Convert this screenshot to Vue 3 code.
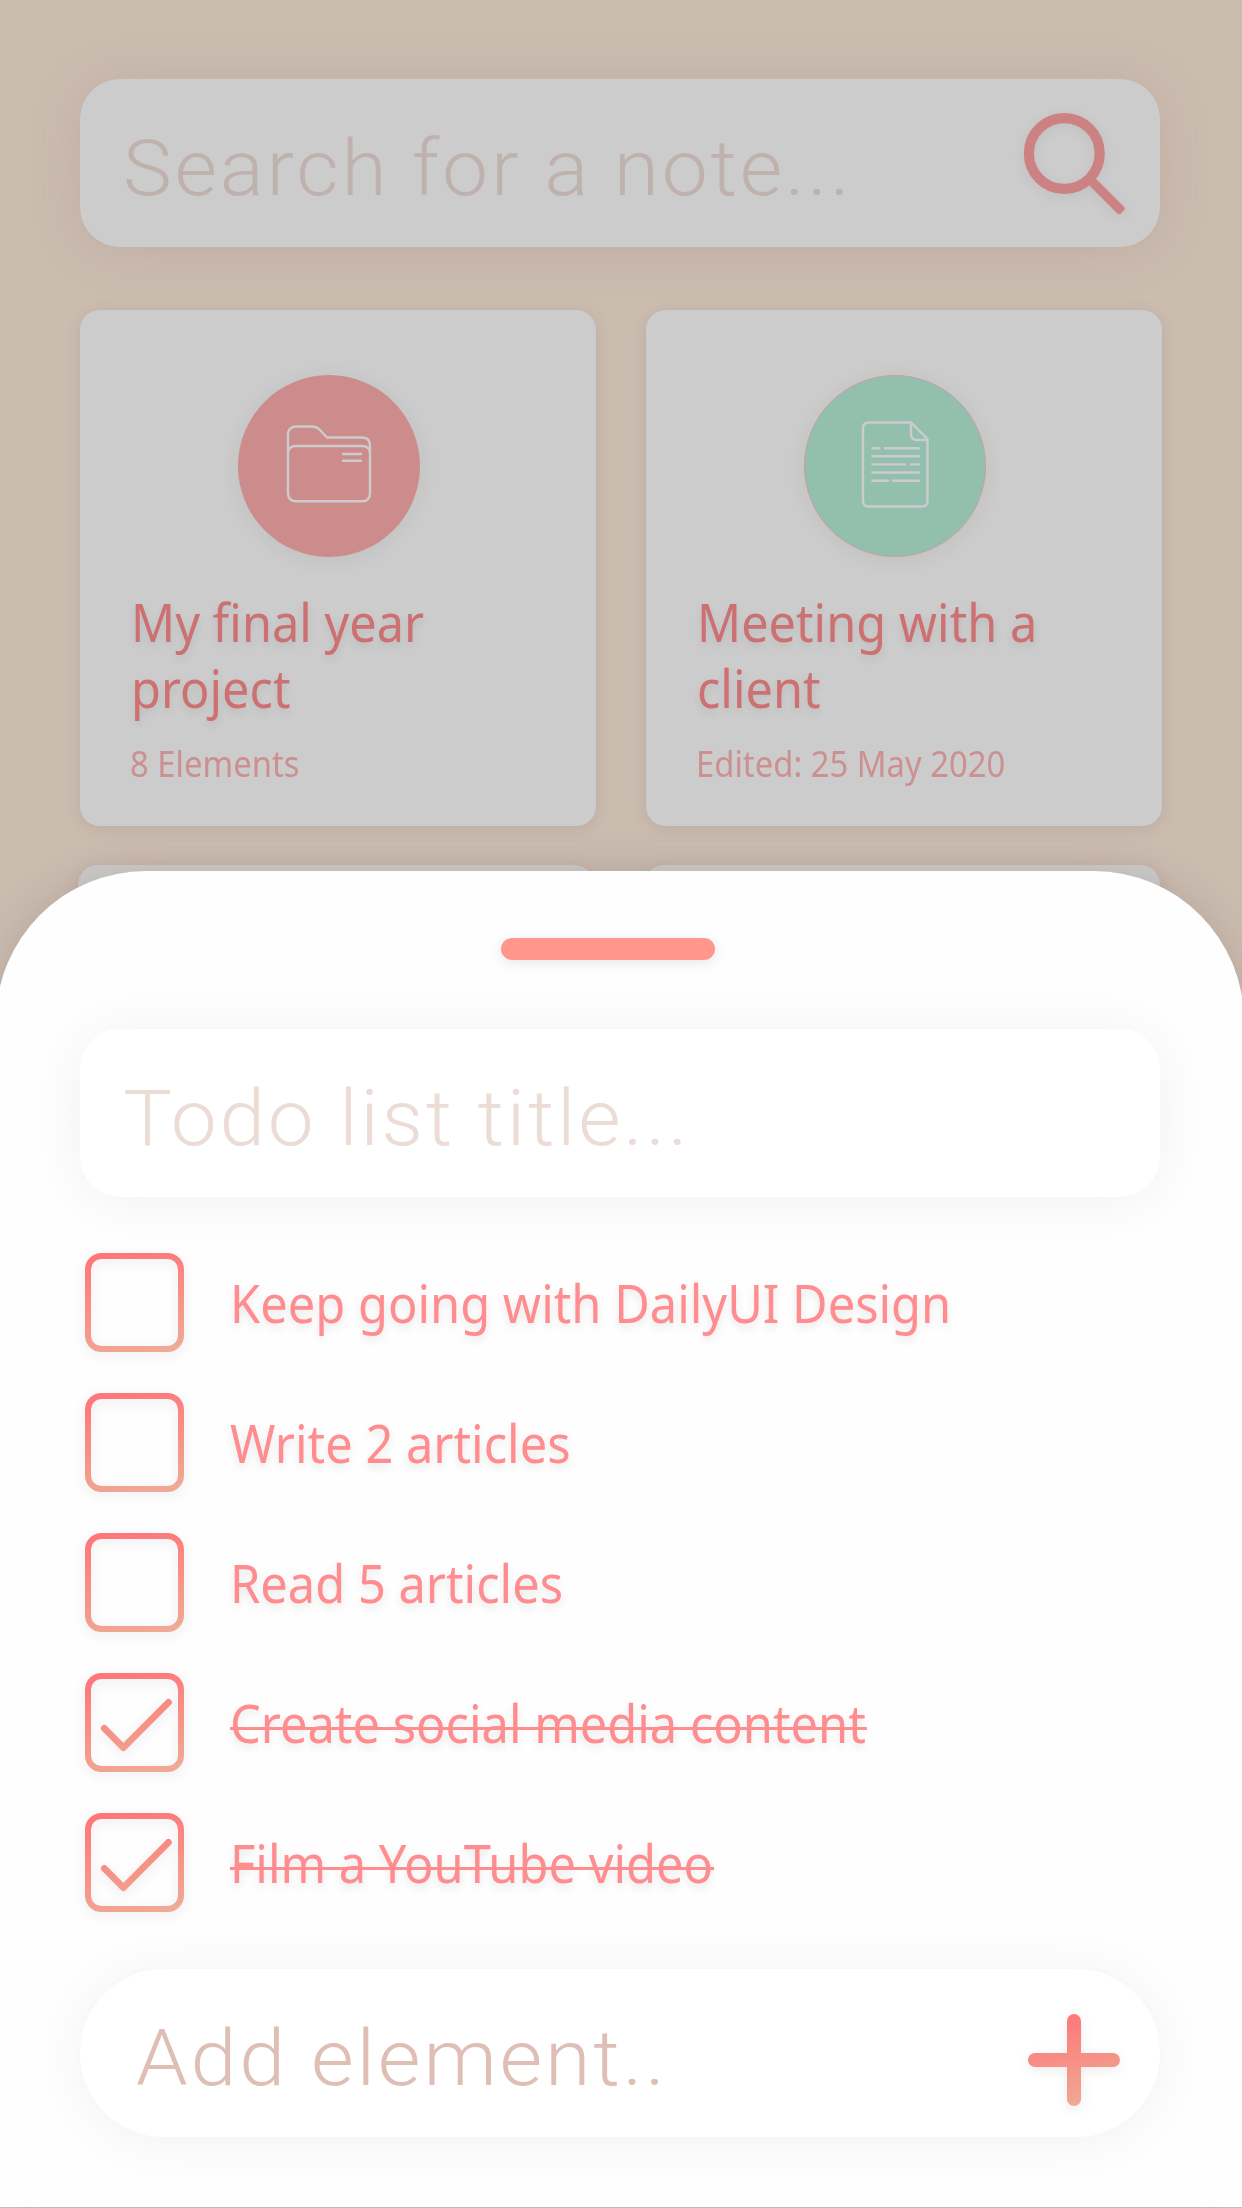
<script setup>
const notes = [
  { icon: 'folder', title: ['My final year', 'project'], meta: '8 Elements' },
  { icon: 'page', title: ['Meeting with a', 'client'], meta: 'Edited: 25 May 2020' },
]

const todos = [
  { label: 'Keep going with DailyUI Design', done: false },
  { label: 'Write 2 articles', done: false },
  { label: 'Read 5 articles', done: false },
  { label: 'Create social media content', done: true },
  { label: 'Film a YouTube video', done: true },
]
</script>

<template>
  <div class="screen">
    <main class="notes">
      <div class="field search">
        <span class="placeholder search-text">Search for a note...</span>
        <svg class="search-icon" width="112" height="112" viewBox="0 0 112 112" fill="none">
          <circle cx="50.3" cy="50.5" r="35.4" stroke="#cc8183" stroke-width="10.2" />
          <rect y="-4.700" width="46.500" height="9.400" rx="2.500" fill="#cc8183" transform="translate(75.500 76) rotate(45)" />
        </svg>
      </div>

      <div class="grid">
        <article v-for="note in notes" :key="note.icon" class="card">
          <div class="badge" :class="note.icon">
            <svg v-if="note.icon === 'folder'" width="182" height="182" viewBox="0 0 182 182" fill="none" stroke="#cccccc" stroke-width="2.400" stroke-linecap="round" stroke-linejoin="round">
              <path d="M50 72V60Q50 51.500 58.500 51.500H74Q78.500 51.500 81.500 54.500L89 62.500H124Q132 62.500 132 71V77" />
              <path d="M50 72V118Q50 126.300 58.500 126.300H124Q132 126.300 132 118V77Q131 71 124 71H58.500Q51 71 50 77" />
              <path d="M105 79H123M105 85.800H123" />
            </svg>
            <svg v-else width="182" height="182" viewBox="0 0 182 182" fill="none" stroke="#cccccc" stroke-width="2.400" stroke-linecap="round" stroke-linejoin="round">
              <path d="M107 47.500H65Q59 47.500 59 53.500V126Q59 131.500 65 131.500H118Q123.500 131.500 123.500 126V64L107 47.500V59Q107 65 113 65H123.500" />
              <path d="M68.500 73.200H75.500M81 73.200H115M68.500 81.300H115M68.500 89.400H101.500M107 89.400H115M68.500 97.500H115M68.500 105.800H84M89 105.800H115" />
            </svg>
          </div>
          <h2 class="title"><span v-for="line in note.title" :key="line">{{ line }}</span></h2>
          <p class="meta"><span>{{ note.meta }}</span></p>
        </article>
      </div>

      <div class="grid next-row">
        <article class="card"></article>
        <article class="card"></article>
      </div>
    </main>

    <section class="sheet">
      <div class="handle"></div>
      <div class="field name">
        <span class="placeholder name-text">Todo list title...</span>
      </div>

      <ul class="todos">
        <li v-for="todo in todos" :key="todo.label" class="todo">
          <svg class="box" width="99" height="99" viewBox="0 0 99 99" fill="none" stroke="url(#coral)" stroke-width="6" stroke-linecap="round" stroke-linejoin="round">
            <defs>
              <linearGradient id="coral" gradientUnits="userSpaceOnUse" x1="40" y1="0" x2="62" y2="99">
                <stop offset="0" stop-color="#fe777a" />
                <stop offset="1" stop-color="#efa994" />
              </linearGradient>
            </defs>
            <rect x="3" y="3" width="93" height="93" rx="13.500" />
            <path v-if="todo.done" d="M19.300 55.300L38.400 74.600L83.500 29.300" stroke-width="6.700" />
          </svg>
          <span class="label" :class="{ done: todo.done }">{{ todo.label }}</span>
        </li>
      </ul>

      <div class="field add">
        <span class="placeholder add-text">Add element..</span>
        <svg class="plus" width="92" height="92" viewBox="0 0 92 92" fill="none" stroke="url(#plus)" stroke-width="14" stroke-linecap="round">
          <defs>
            <linearGradient id="plus" gradientUnits="userSpaceOnUse" x1="36" y1="0" x2="56" y2="92">
              <stop offset="0" stop-color="#fe777a" />
              <stop offset="1" stop-color="#efa994" />
            </linearGradient>
          </defs>
          <path d="M46 7V85M7 46H85" />
        </svg>
      </div>
    </section>
  </div>
</template>

<style>
body {
  margin: 0;
  background: #cbbcb0;
}
</style>

<style scoped>
.screen {
  width: 1242px;
  height: 2208px;
  overflow: hidden;
  position: relative;
  background: linear-gradient(#cbbcb0, #cbbcb0 2207px, #c6c9c6 2207px);
  font-family: "Noto Sans", "Open Sans", sans-serif;
}

.notes {
  padding: 79px 80px 0;
}

.field {
  box-sizing: border-box;
  width: 1080px;
  height: 168px;
  border-radius: 40px;
  display: flex;
  align-items: center;
  justify-content: space-between;
}

.placeholder {
  font-family: Roboto, sans-serif;
  font-weight: 300;
  font-size: 77px;
  line-height: 100px;
  letter-spacing: 2.6px;
  white-space: nowrap;
  padding-top: 11px;
  transform: scaleX(1.067);
  transform-origin: left;
}

.search {
  background: #cccccc;
  box-shadow: 0 3px 50px rgba(160, 118, 110, 0.22);
  padding: 0 31px 0 43px;
}

.search-text {
  color: #bfb1ae;
}

.search-icon {
  margin-top: -8px;
  margin-right: 3px;
  filter: drop-shadow(0 3px 6px rgba(0, 0, 0, 0.06));
}

.grid {
  width: 1082px;
  display: flex;
  justify-content: space-between;
  margin-top: 63px;
}

.card {
  box-sizing: border-box;
  width: 516px;
  height: 516px;
  border-radius: 20px;
  background: #cccccc;
  box-shadow: 0 3px 14px rgba(150, 110, 105, 0.22);
  padding: 65px 50px 0;
}

.next-row {
  margin-top: 39px;
  margin-left: -2px;
}

.badge {
  box-sizing: border-box;
  width: 182px;
  height: 182px;
  margin-left: 108px;
  border-radius: 50%;
  display: flex;
  align-items: center;
  justify-content: center;
  box-shadow: 0 3px 22px rgba(0, 0, 0, 0.06);
}

.badge svg {
  flex: none;
}

.folder {
  background: #cc8c8c;
}

.page {
  background: #93bfae;
  border: 1px solid #c6a09c;
}

.title {
  margin: 32px 0 0 1px;
  font-size: 52px;
  font-weight: 400;
  line-height: 66px;
  color: #cc7072;
  text-shadow: 0 4px 9px rgba(0, 0, 0, 0.09);
  white-space: nowrap;
  transform: scaleX(0.936);
  transform-origin: left;
}

.title span {
  display: block;
}

.meta {
  margin: 18px 0 0;
  font-size: 35.5px;
  line-height: 48px;
  color: #cc9090;
  white-space: nowrap;
  transform: scaleX(0.924);
  transform-origin: left;
}

.sheet {
  position: absolute;
  left: -4px;
  top: 871px;
  box-sizing: border-box;
  width: 1248px;
  height: 1336px;
  padding: 67px 84px 0;
  border-radius: 150px 150px 0 0;
  background: #fefefe;
  box-shadow: 0 0 40px rgba(110, 75, 70, 0.2);
}

.handle {
  width: 214px;
  height: 22px;
  margin-left: 421px;
  border-radius: 11px;
  background: #ff978d;
  box-shadow: 0 3px 14px rgba(0, 0, 0, 0.09);
}

.name,
.add {
  background: #ffffff;
  box-shadow: 0 3px 55px rgba(0, 0, 0, 0.055);
}

.name {
  margin-top: 69px;
  padding: 0 43px;
}

.name-text {
  color: #ebdcd6;
  transform: scaleX(1.064);
}

.todos {
  list-style: none;
  margin: 56px 0 0;
  padding: 0 0 0 5px;
  display: flex;
  flex-direction: column;
  gap: 41px;
}

.todo {
  height: 99px;
  display: flex;
  align-items: center;
  gap: 46px;
}

.box {
  overflow: visible;
  filter: drop-shadow(0 3px 6px rgba(0, 0, 0, 0.08));
}

.label {
  position: relative;
  font-size: 52px;
  line-height: 99px;
  color: #ff8c8f;
  white-space: nowrap;
  text-shadow: 0 4px 9px rgba(0, 0, 0, 0.1);
  transform: scaleX(0.938);
  transform-origin: left;
}

.done::after {
  content: "";
  position: absolute;
  left: 0;
  right: -1px;
  top: 54px;
  height: 3px;
  background: #ff8c8f;
}

.add {
  margin-top: 57px;
  border-radius: 84px;
  padding: 0 40px 0 56px;
}

.add-text {
  color: #dfbeb6;
  transform: scaleX(1.074);
}

.plus {
  margin-top: 14px;
  filter: drop-shadow(0 3px 6px rgba(0, 0, 0, 0.08));
}
</style>
